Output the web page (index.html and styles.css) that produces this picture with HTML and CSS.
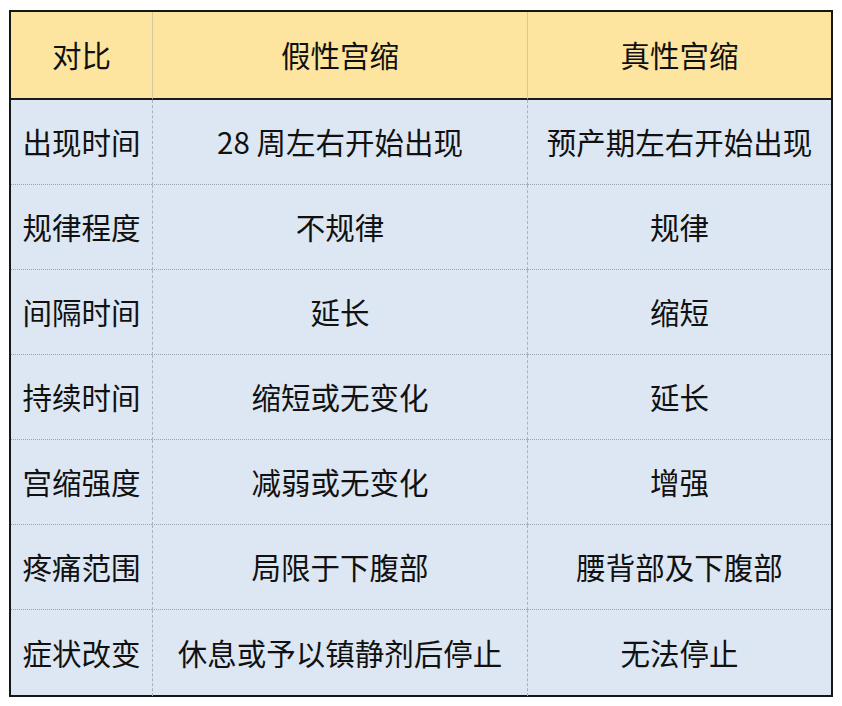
FILE: index.html
```html
<!DOCTYPE html>
<html lang="zh-CN">
<head>
<meta charset="utf-8">
<link rel="stylesheet" href="styles.css">
</head>
<body>
<div class="table">
  <div class="cell head">对比</div>
  <div class="cell head col">假性宫缩</div>
  <div class="cell head col">真性宫缩</div>

  <div class="cell">出现时间</div>
  <div class="cell col">28 周左右开始出现</div>
  <div class="cell col">预产期左右开始出现</div>

  <div class="cell">规律程度</div>
  <div class="cell col">不规律</div>
  <div class="cell col">规律</div>

  <div class="cell">间隔时间</div>
  <div class="cell col">延长</div>
  <div class="cell col">缩短</div>

  <div class="cell">持续时间</div>
  <div class="cell col">缩短或无变化</div>
  <div class="cell col">延长</div>

  <div class="cell">宫缩强度</div>
  <div class="cell col">减弱或无变化</div>
  <div class="cell col">增强</div>

  <div class="cell">疼痛范围</div>
  <div class="cell col">局限于下腹部</div>
  <div class="cell col">腰背部及下腹部</div>

  <div class="cell last">症状改变</div>
  <div class="cell col last">休息或予以镇静剂后停止</div>
  <div class="cell col last">无法停止</div>
</div>
</body>
</html>
```
FILE: styles.css
```css
html, body {
  margin: 0;
  padding: 0;
  background: #ffffff;
}
body {
  padding: 10px 0 0 9px;
  font-family: "Noto Sans CJK SC", "Noto Sans", sans-serif;
  color: #111111;
}
.table {
  width: 820px;
  border: 2px solid #161616;
  display: grid;
  grid-template-columns: 141px 375px 304px;
  grid-auto-rows: 85px;
  grid-template-rows: 88px;
  background: #dde7f3;
}
.cell {
  display: flex;
  align-items: center;
  justify-content: center;
  font-size: 29.5px;
  line-height: 1;
  border-bottom: 1px dotted #9aa3ad;
  box-sizing: border-box;
  white-space: nowrap;
  letter-spacing: 0;
}
.col {
  border-left: 1px dashed #a9b1ba;
}
.head {
  background: #fde59f;
  border-bottom: 2px solid #1b1b1b;
}
.head.col {
  border-left: 1px solid #d8c79a;
}
.last {
  border-bottom: none;
  height: 86px;
}
```
